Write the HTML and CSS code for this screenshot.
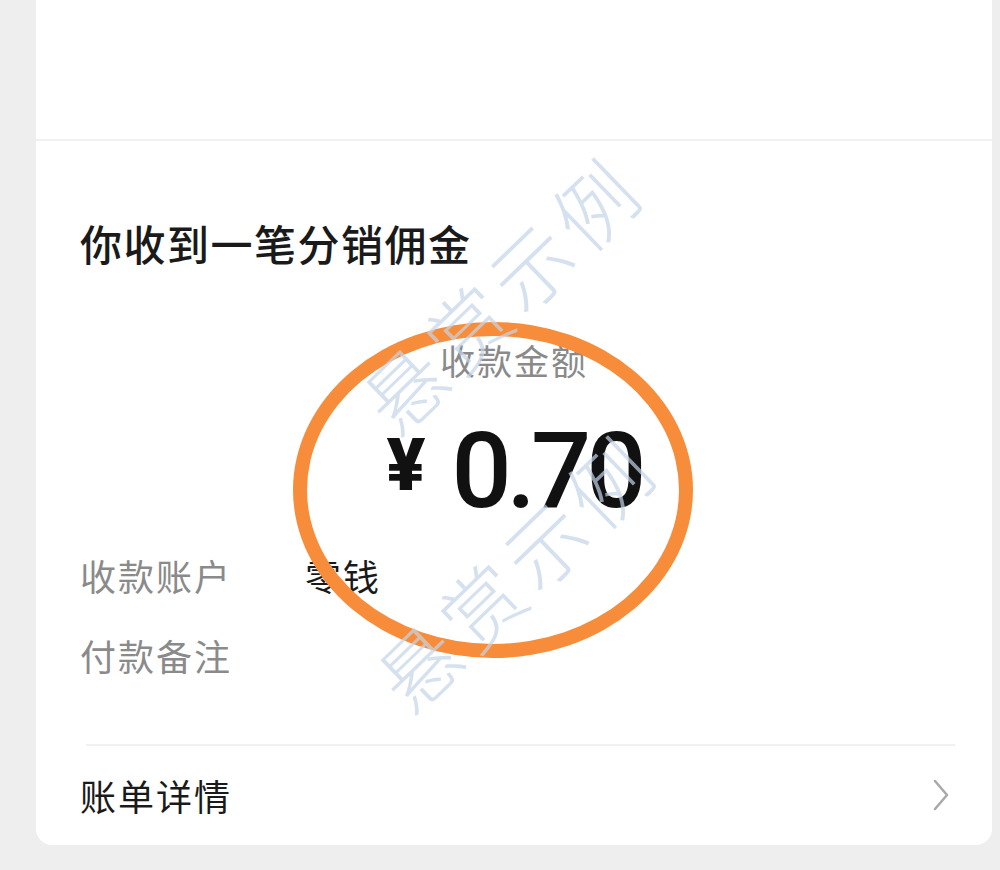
FILE: index.html
```html
<!DOCTYPE html>
<html lang="zh-CN">
<head>
    <meta charset="UTF-8">
    <meta name="viewport" content="width=device-width, initial-scale=1.0">
    <title>分销佣金</title>
    <link rel="stylesheet" href="styles.css">
</head>
<body>
    <div class="card">
        <div class="card-header"></div>
        <h1 class="title">你收到一笔分销佣金</h1>
        <div class="amount-label">收款金额</div>
        <div class="amount">
            <span class="currency">¥</span>
            <span class="value">0.70</span>
        </div>
        <div class="info-row">
            <span class="info-label">收款账户</span>
            <span class="info-value">零钱</span>
        </div>
        <div class="info-row">
            <span class="info-label">付款备注</span>
            <span class="info-value"></span>
        </div>
        <div class="divider"></div>
        <div class="detail-row">
            <span>账单详情</span>
            <svg class="chevron" width="18" height="34" viewBox="0 0 18 34">
                <path d="M3 3 L15 17 L3 31" fill="none" stroke="#a8a8a8" stroke-width="2.5" stroke-linecap="round" stroke-linejoin="round"/>
            </svg>
        </div>

        <!-- highlight ring + watermark -->
        <div class="ring"></div>
        <div class="watermark wm-top">悬赏示例</div>
        <div class="watermark wm-bottom">悬赏示例</div>
    </div>
</body>
</html>
```

FILE: styles.css
```css
body {
    margin: 0;
    background-color: #eeeeee;
    font-family: "Noto Sans CJK SC", "Noto Sans", sans-serif;
    height: 870px;
    overflow: hidden;
}
.card {
    position: relative;
    margin-left: 36px;
    width: 956px;
    height: 845px;
    background-color: #fff;
    border-radius: 0 0 16px 16px;
    overflow: hidden;
}
.card-header {
    height: 139px;
    border-bottom: 2px solid #f1f1f1;
}
.title {
    margin: 81px 0 0 44px;
    font-size: 42px;
    line-height: 42px;
    font-weight: 500;
    color: #1a1a1a;
    letter-spacing: 1.5px;
}
.amount-label {
    margin-top: 78px;
    text-align: center;
    font-size: 35px;
    line-height: 36px;
    color: #8a8a8a;
    letter-spacing: 2px;
}
.amount {
    margin-top: 38px;
    display: flex;
    justify-content: center;
    align-items: center;
    gap: 26px;
    height: 110px;
    font-family: Roboto, "Liberation Sans", sans-serif;
    color: #111;
}
.currency {
    font-size: 72px;
    font-weight: 900;
    line-height: 1;
    margin-bottom: 10px;
}
.value {
    font-size: 106px;
    font-weight: 500;
    line-height: 110px;
    letter-spacing: -5px;
}
.info-row {
    display: flex;
    margin: 31px 0 0 44px;
    font-size: 36px;
    line-height: 37px;
    height: 37px;
}
.info-row + .info-row {
    margin-top: 43px;
}
.info-label {
    width: 225px;
    color: #8a8a8a;
    letter-spacing: 2px;
}
.info-value {
    color: #1a1a1a;
    letter-spacing: 2px;
}
.divider {
    margin: 70px 37px 0 50px;
    height: 2px;
    background-color: #f1f1f1;
}
.detail-row {
    display: flex;
    justify-content: space-between;
    align-items: center;
    margin-top: 30px;
    padding: 0 42px 0 44px;
    font-size: 36px;
    line-height: 38px;
    color: #1a1a1a;
    letter-spacing: 2px;
}
.ring {
    position: absolute;
    left: 257px;
    top: 322px;
    width: 400px;
    height: 336px;
    box-sizing: border-box;
    border: 14px solid #f78c3a;
    border-radius: 50%;
}
.watermark {
    position: absolute;
    width: 360px;
    text-align: center;
    font-size: 80px;
    line-height: 80px;
    font-weight: 200;
    letter-spacing: 8px;
    color: rgba(195, 212, 232, 0.7);
    transform: rotate(-44deg);
    white-space: nowrap;
}
.wm-top {
    left: 284px;
    top: 252px;
}
.wm-bottom {
    left: 298px;
    top: 530px;
}
```
